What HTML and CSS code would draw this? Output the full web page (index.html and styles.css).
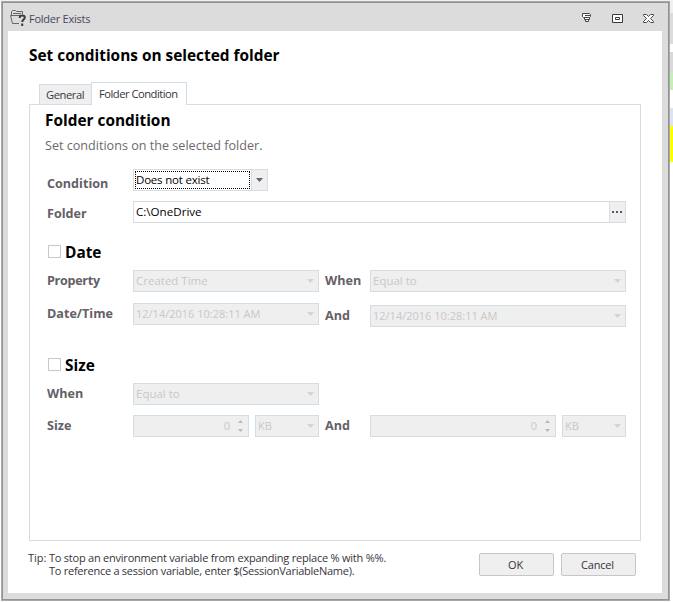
FILE: index.html
```html
<!DOCTYPE html>
<html lang="en">
<head>
<meta charset="utf-8">
<title>Folder Exists</title>
<link rel="stylesheet" href="styles.css">
</head>
<body>
<div class="desktop">
<div class="window">
  <header class="titlebar">
    <svg class="app-icon" width="17" height="17" viewBox="0 0 17 17" fill="none" stroke="#6c6668"><path d="M9 13.500H2.500L.5 5.500h10M1.500 5V1.500l1-1h3l1 1h6V4M3 3.500h8"/><path d="M9.800 8V7C10 4.800 14.800 4.800 14.800 7.500c0 2-2.600 2-2.600 4.500M12.200 13.500V16" stroke="#3f3a3e" stroke-width="2"/></svg>
    <span class="caption">Folder Exists</span>
    <svg class="win-btn" width="11" height="11" viewBox="0 0 11 11" fill="#fff" stroke="#4b4549"><path d="M1.500 .5h7l1 1v2l-1 1h-6l-1-1zM4 2.500h5M3.500 4.500h5v2h-5zM4.500 6.500h3v2h-3z"/></svg>
    <svg class="win-btn" width="11" height="11" viewBox="0 0 11 11" fill="#fff" stroke="#3d373b"><path d="M.5 1.500h10v8H.5z"/><path d="M3.500 4.500h4v2h-4z"/></svg>
    <svg class="win-btn last" width="11" height="11" viewBox="0 0 11 11" fill="#fff" stroke="#4b4549"><path d="M.5 1.500h3l2 2 2-2h3v1l-3 3 3 3v1h-3l-2-2-2 2h-3v-1l3-3-3-3z"/></svg>
  </header>
  <main class="content">
    <h1 class="title">Set conditions on selected folder</h1>
    <nav class="tabs"><span class="tab">General</span><span class="tab active">Folder Condition</span></nav>
    <section class="panel">
      <h2>Folder condition</h2>
      <p class="intro">Set conditions on the selected folder.</p>
      <div class="row condition">
        <label>Condition</label>
        <div class="combo focused"><span class="value">Does not exist</span><span class="drop"><i class="arrow"></i></span></div>
      </div>
      <div class="row folder">
        <label>Folder</label>
        <div class="path"><span class="value">C:\OneDrive</span><span class="browse"><i></i><i></i><i></i></span></div>
      </div>
      <div class="check date"><i class="box"></i><h3>Date</h3></div>
      <div class="row property">
        <label>Property</label>
        <div class="field medium"><span class="created">Created Time</span><i class="arrow"></i></div>
        <label class="second">When</label>
        <div class="field wide"><span class="created">Equal to</span><i class="arrow"></i></div>
      </div>
      <div class="row datetime">
        <label>Date/Time</label>
        <div class="field medium"><span class="stamp">12/14/2016 10:28:11 AM</span><i class="arrow"></i></div>
        <label class="second lower">And</label>
        <div class="field wide lower"><span class="stamp">12/14/2016 10:28:11 AM</span><i class="arrow"></i></div>
      </div>
      <div class="check size"><i class="box"></i><h3>Size</h3></div>
      <div class="row when">
        <label>When</label>
        <div class="field medium"><span class="created">Equal to</span><i class="arrow"></i></div>
      </div>
      <div class="row amount">
        <label>Size</label>
        <div class="field number"><span>0</span><svg width="5" height="12" viewBox="0 0 5 12" fill="#b9b9b9"><path d="M0 3L2.500 0 5 3zM0 9h5L2.500 12z"/></svg></div>
        <div class="field unit"><span>KB</span><i class="arrow"></i></div>
        <label class="second">And</label>
        <div class="field number big"><span>0</span><svg width="5" height="12" viewBox="0 0 5 12" fill="#b9b9b9"><path d="M0 3L2.500 0 5 3zM0 9h5L2.500 12z"/></svg></div>
        <div class="field unit"><span>KB</span><i class="arrow"></i></div>
      </div>
    </section>
    <footer class="footer">
      <span class="tip-label">Tip:</span>
      <div class="tip"><div class="tip-one">To stop an environment variable from expanding replace % with %%.</div><div class="tip-two">To reference a session variable, enter $(SessionVariableName).</div></div>
      <button>OK</button>
      <button>Cancel</button>
    </footer>
  </main>
</div>
<aside class="behind"><i class="top"></i><i class="gray"></i><i class="gap"></i><i class="gray2"></i><i class="green"></i><i class="gap2"></i><i class="blue"></i><i class="yellow"></i></aside>
</div>
</body>
</html>
```
FILE: styles.css
```css
* { box-sizing: border-box; }
body { margin: 0; background: #fff; font: 11px/14px "Open Sans", sans-serif; color: #38343c; }
h1, h2, h3, p { margin: 0; font-weight: 700; color: #000; white-space: nowrap; }
span, label { white-space: nowrap; }
svg, i { display: block; flex: none; }
.desktop { display: flex; width: 673px; height: 602px; overflow: hidden; padding-left: 1px; border-top: 1px solid #eef2f1; }
.window { width: 669px; height: 600px; background: #dcdcdc; border: 1px solid #a9a9a9; box-shadow: inset 0 0 0 1px #939393; padding: 0 7px 0 6px; }
.titlebar { height: 29px; display: flex; align-items: flex-start; padding: 8px 8px 0 2px; }
.caption { margin: 2px auto 0 2px; letter-spacing: -0.25px; color: #48445a; }
.win-btn { margin: 3px 20px 0 0; }
.win-btn.last { margin-right: 0; }
.content { height: 562px; background: #fff; padding: 14px 21px 0; }
.title { font-size: 15.4px; line-height: 22px; }
.tabs { display: flex; align-items: flex-end; height: 23px; margin: 15px 0 -1px 10px; position: relative; }
.tab { width: 52px; height: 21px; padding: 3px 0 0 6px; background: #efefef; border: 1px solid #d3dde6; border-right: 0; letter-spacing: -0.45px; font-size: 11.2px; }
.tab.active { width: 96px; height: 23px; background: #fff; border-right: 1px solid #d3dde6; border-bottom: 0; padding: 4px 0 0 7px; letter-spacing: -0.5px; }
.panel { width: 612px; height: 437px; border: 1px solid #d3dde6; padding: 5px 0 0 17px; }
h2 { font-size: 15.400px; line-height: 22px; margin-left: -2px; }
.intro { font-size: 12.6px; line-height: 18px; font-weight: 400; color: #6d696b; margin: 5px 0 0 -2px; }
.row { display: flex; align-items: center; height: 22px; color: #000; }
label { width: 86px; font-size: 12.6px; line-height: 18px; font-weight: 700; color: #646066; }
label.second { width: 45px; margin-left: 6px; }
.property label:first-child { letter-spacing: -0.3px; }
.condition { margin-top: 14px; }
.condition label { padding-top: 8px; }
.folder { margin-top: 10px; }
.folder label { padding-top: 3px; }
.combo { width: 135px; height: 22px; display: flex; border: 1px solid #d3dde6; }
.combo .value { width: 115px; border: 1px dotted #000; margin: 1px; padding: 0; line-height: 16px; font-size: 11.5px; letter-spacing: -0.2px; }
.drop { flex: 1; border-left: 1px solid #d3dde6; background: #efefef; padding: 8px 0 0 4px; }
.arrow { width: 7px; height: 4px; background: #d3d3d3; clip-path: polygon(0 0, 100% 0, 50% 100%); }
.drop .arrow { background: #686468; }
.path { width: 493px; height: 22px; display: flex; border: 1px solid #d3dde6; }
.path .value { flex: 1; padding: 2px; font-size: 11.6px; line-height: 16px; }
.browse { width: 16px; display: flex; gap: 2px; padding-left: 2px; align-items: center; background: #efefef; border-left: 1px solid #d3dde6; }
.browse i { width: 2px; height: 2px; background: #5c565a; }
.check { display: flex; align-items: center; height: 22px; }
.check.date { margin-top: 18px; }
.check.size { margin-top: 29px; }
.box { width: 13px; height: 13px; border: 1px solid #c9c9c9; margin: -1px 4px 0 1px; }
h3 { font-size: 15.4px; line-height: 22px; padding-top: 2px; }
.property { margin-top: 7px; }
.datetime { margin-top: 11px; }
.lower { transform: translateY(2px); }
.when { margin-top: 7px; }
.amount { margin-top: 10px; }
.field { height: 22px; display: flex; align-items: center; justify-content: space-between; border: 1px solid #d3dde6; background: #efefef; color: #c9c7c9; padding: 0 4px 0 2px; }
.created { font-size: 11.5px; }
.medium { width: 186px; }
.wide { width: 256px; }
.number { width: 116px; justify-content: flex-end; gap: 8px; padding-right: 5px; }
.number.big { width: 186px; }
.unit { width: 64px; margin-left: 6px; }
.footer { display: flex; margin-top: 10px; }
.tip-label { width: 21px; margin-left: -1px; flex: none; }
.tip { width: 430px; line-height: 13px; flex: none; }
.tip-one { letter-spacing: -0.23px; }
.tip-two { letter-spacing: -0.26px; }
button { width: 75px; height: 23px; margin-top: 2px; margin-right: 7px; padding: 0 2px 0 0; font: inherit; letter-spacing: -0.2px; color: inherit; background: #efefef; border: 1px solid #c6c6c6; border-radius: 2px; flex: none; }
.behind { width: 3px; }
.top { height: 12px; background: #f0f0f0; }
.gray { height: 31px; background: #dcdcdc; }
.gap { height: 8px; }
.gray2 { height: 20px; background: #d9d9d9; }
.green { height: 18px; background: #c6efb8; }
.gap2 { height: 18px; }
.blue { height: 18px; background: #dbe5f1; }
.yellow { height: 36px; background: #ff0; }
```
